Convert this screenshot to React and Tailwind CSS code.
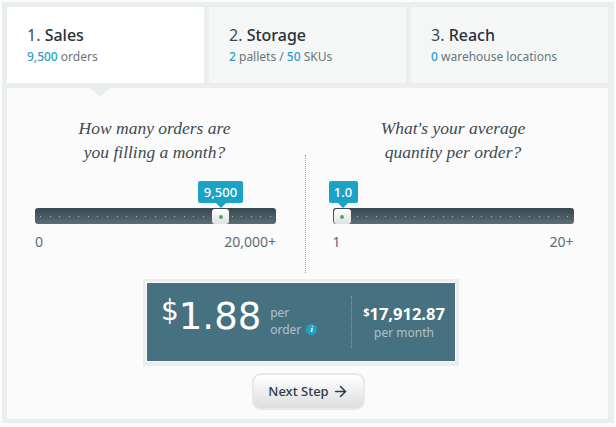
import { ArrowRight } from "lucide-react";

const PASOS = [
  { num: "1.", titulo: "Sales", activo: true, detalle: [["9,500", true], [" orders", false]] },
  { num: "2.", titulo: "Storage", detalle: [["2", true], [" pallets / ", false], ["50", true], [" SKUs", false]] },
  { num: "3.", titulo: "Reach", detalle: [["0", true], [" warehouse locations", false]] },
];

function Paso({ paso }) {
  return (
    <div className={`flex-1 h-[76px] pl-[20px] pt-[17px] ${paso.activo ? "bg-white" : "bg-[#f5f7f7]"}`}>
      <p className="text-[16px] leading-[22px] text-[#25323a]">
        <span className="text-[#3c4a52]">{paso.num} </span>
        <span className="font-medium">{paso.titulo}</span>
      </p>
      <p className="text-[12px] leading-[20px] mt-[1px] text-[#66757d]">
        {paso.detalle.map(([texto, azul], i) => (
          <span key={i} className={azul ? "text-[#2ba1c9] font-medium" : ""}>{texto}</span>
        ))}
      </p>
    </div>
  );
}

function Slider({ valor, min, max, posicion, burbuja, ancho }) {
  return (
    <div className="w-[241px]">
      <div className="relative h-[16px] rounded-[3px] bg-gradient-to-b from-[#364850] to-[#5b6c73] flex items-center justify-between px-[5px]">
        {Array.from({ length: 25 }).map((_, i) => (
          <span key={i} className="w-px h-px bg-[#aab5ba]" />
        ))}
        <div
          className="absolute top-[1px] w-[17px] h-[15px] rounded-[3px] bg-gradient-to-b from-white to-[#dfe2e2] flex items-center justify-center"
          style={{ left: posicion }}
        >
          <span className="w-[4px] h-[4px] rounded-full bg-[#3fae5a]" />
        </div>
        <div
          className="absolute top-[-27px] h-[22px] rounded-[2px] bg-[#1ba3c6] text-white text-[13px] font-medium leading-[22px] text-center"
          style={{ left: burbuja, width: ancho }}
        >
          {valor}
          <span className="absolute left-1/2 bottom-[-5px] -ml-[5px] w-0 h-0 border-x-[5px] border-x-transparent border-t-[5px] border-t-[#1ba3c6]" />
        </div>
      </div>
      <div className="flex justify-between mt-[9px] text-[14px] leading-[18px] text-[#5a6c78]">
        <span>{min}</span>
        <span>{max}</span>
      </div>
    </div>
  );
}

export default function App() {
  return (
    <div className="w-[616px] h-[427px] bg-[#fbfcfc] pt-[2px] pl-[2px] font-['Noto_Sans',sans-serif]">
      <div className="w-[612px] h-[421px] bg-[#ebeeef] pt-[5px] pl-[5px] pr-[6px]">
        <div className="flex gap-[5px]">
          {PASOS.map((paso) => (
            <Paso key={paso.num} paso={paso} />
          ))}
        </div>

        <div className="relative mt-[5px] h-[331px] bg-[#fbfbfb]">
          <span className="absolute left-[83px] top-0 w-0 h-0 border-x-[10px] border-x-transparent border-t-[9px] border-t-[#ebeeef]" />

          <div className="flex h-[186px]">
            <div className="w-[297px] flex flex-col items-center pt-[28px]">
              <h2 className="font-['Liberation_Serif',serif] italic text-[17.5px] leading-[24px] text-[#3c4a52] text-center h-[92px] pr-[2px]">
                How many orders are<br />you filling a month?
              </h2>
              <Slider valor="9,500" min="0" max="20,000+" posicion="177px" burbuja="163px" ancho="45px" />
            </div>
            <div className="w-[298px] flex flex-col items-center pt-[28px] relative">
              <span className="absolute left-[1px] top-[67px] h-[118px] border-l border-dotted border-[#9aa5aa]" />
              <h2 className="font-['Liberation_Serif',serif] italic text-[17.5px] leading-[24px] text-[#3c4a52] text-center h-[92px]">
                What's your average<br />quantity per order?
              </h2>
              <Slider valor="1.0" min="1" max="20+" posicion="1px" burbuja="-4px" ancho="29px" />
            </div>
          </div>

          <div className="w-[316px] h-[87px] ml-[136px] mt-[5px] bg-[#ebeeef] p-[3px] pb-[4px]">
            <div className="h-full bg-[#467180] border border-white flex">
              <div className="w-[204px] flex pl-[14px] pt-[12px]">
                <span className="font-['DejaVu_Sans',sans-serif] text-white text-[28px] leading-[30px] mt-[1px]">$</span>
                <span className="font-['DejaVu_Sans',sans-serif] text-white text-[37px] leading-[44px]">1.88</span>
                <p className="text-[12px] leading-[17px] text-[#aec4cc] ml-[9px] mt-[9px]">
                  per<br />
                  <span className="inline-flex items-center gap-[5px]">
                    order
                    <span className="w-[11px] h-[11px] rounded-full bg-[#1ba3c6] text-white text-[9px] leading-[11px] text-center italic font-bold font-['Liberation_Serif',serif]">i</span>
                  </span>
                </p>
              </div>
              <div className="my-[13px] border-l border-dotted border-[#80a0ab]" />
              <div className="flex-1 text-center pt-[19px] pl-[1px]">
                <p className="text-white font-bold text-[16.5px] leading-[20px]">
                  <span className="text-[11px] align-[4px]">$</span>17,912.87
                </p>
                <p className="text-[12px] leading-[17px] text-[#aec4cc]">per month</p>
              </div>
            </div>
          </div>

          <div className="pl-[245px] mt-[7px]">
            <button className="w-[113px] h-[37px] rounded-[9px] border-[2px] border-[#e6e8e9] bg-gradient-to-b from-white to-[#dcdedf] flex items-center justify-center gap-[3px] text-[13px] font-medium text-[#2c3c44]">
              Next Step
              <ArrowRight size={17} strokeWidth={2.2} />
            </button>
          </div>
        </div>
      </div>
    </div>
  );
}
